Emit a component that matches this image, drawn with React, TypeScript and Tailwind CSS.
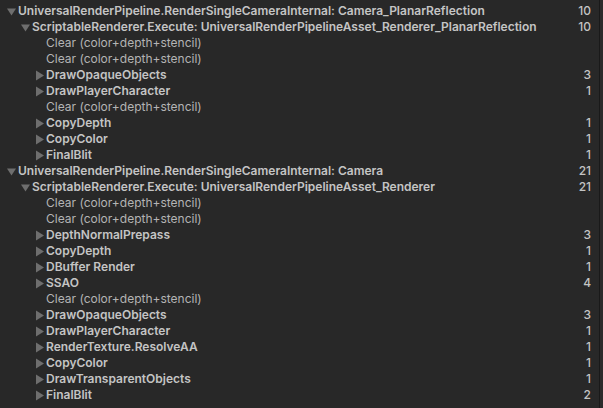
import React from 'react';

interface Row {
  level: number;
  name: string;
  count?: number;
  // 'open' = expanded triangle, 'closed' = collapsed, undefined = leaf
  toggle?: 'open' | 'closed';
}

const CLEAR = 'Clear (color+depth+stencil)';

const rows: Row[] = [
  { level: 0, name: 'UniversalRenderPipeline.RenderSingleCameraInternal: Camera_PlanarReflection', count: 10, toggle: 'open' },
  { level: 1, name: 'ScriptableRenderer.Execute: UniversalRenderPipelineAsset_Renderer_PlanarReflection', count: 10, toggle: 'open' },
  { level: 2, name: CLEAR },
  { level: 2, name: CLEAR },
  { level: 2, name: 'DrawOpaqueObjects', count: 3, toggle: 'closed' },
  { level: 2, name: 'DrawPlayerCharacter', count: 1, toggle: 'closed' },
  { level: 2, name: CLEAR },
  { level: 2, name: 'CopyDepth', count: 1, toggle: 'closed' },
  { level: 2, name: 'CopyColor', count: 1, toggle: 'closed' },
  { level: 2, name: 'FinalBlit', count: 1, toggle: 'closed' },
  { level: 0, name: 'UniversalRenderPipeline.RenderSingleCameraInternal: Camera', count: 21, toggle: 'open' },
  { level: 1, name: 'ScriptableRenderer.Execute: UniversalRenderPipelineAsset_Renderer', count: 21, toggle: 'open' },
  { level: 2, name: CLEAR },
  { level: 2, name: CLEAR },
  { level: 2, name: 'DepthNormalPrepass', count: 3, toggle: 'closed' },
  { level: 2, name: 'CopyDepth', count: 1, toggle: 'closed' },
  { level: 2, name: 'DBuffer Render', count: 1, toggle: 'closed' },
  { level: 2, name: 'SSAO', count: 4, toggle: 'closed' },
  { level: 2, name: CLEAR },
  { level: 2, name: 'DrawOpaqueObjects', count: 3, toggle: 'closed' },
  { level: 2, name: 'DrawPlayerCharacter', count: 1, toggle: 'closed' },
  { level: 2, name: 'RenderTexture.ResolveAA', count: 1, toggle: 'closed' },
  { level: 2, name: 'CopyColor', count: 1, toggle: 'closed' },
  { level: 2, name: 'DrawTransparentObjects', count: 1, toggle: 'closed' },
  { level: 2, name: 'FinalBlit', count: 2, toggle: 'closed' },
];

const indent = ['pl-[7px]', 'pl-[21px]', 'pl-[35px]'];

function Toggle({ state }: { state?: 'open' | 'closed' }) {
  if (!state) return <span className="w-[11px] shrink-0" />;
  return (
    <svg width="11" height="16" viewBox="0 0 11 16" className="shrink-0">
      {state === 'open' ? (
        <path d="M0 5.5 L9 5.5 L4.5 12.5 Z" fill="#6e6e6e" />
      ) : (
        <path d="M1 3.5 L9 8.5 L1 13.5 Z" fill="#6e6e6e" />
      )}
    </svg>
  );
}

export default function App() {
  return (
    <div className="w-[603px] h-[408px] bg-[#282828] flex overflow-hidden font-['Inter','Liberation_Sans',sans-serif] text-[12px]">
      <div className="w-[599px] pt-[3px] flex flex-col">
        {rows.map((row, i) => (
          <div key={i} className={`h-[16px] shrink-0 flex items-center pr-[8px] ${indent[row.level]}`}>
            <Toggle state={row.toggle} />
            <span
              className={`whitespace-nowrap leading-[16px] ${
                row.toggle ? 'font-semibold text-[#c4c4c4]' : 'text-[#b4b4b4]'
              }`}
            >
              {row.name}
            </span>
            <span className="ml-auto font-medium text-[#c4c4c4] leading-[16px]">{row.count}</span>
          </div>
        ))}
      </div>
      <div className="w-px bg-[#191919]" />
      <div className="flex-1 bg-[#2b2b2b]" />
    </div>
  );
}
